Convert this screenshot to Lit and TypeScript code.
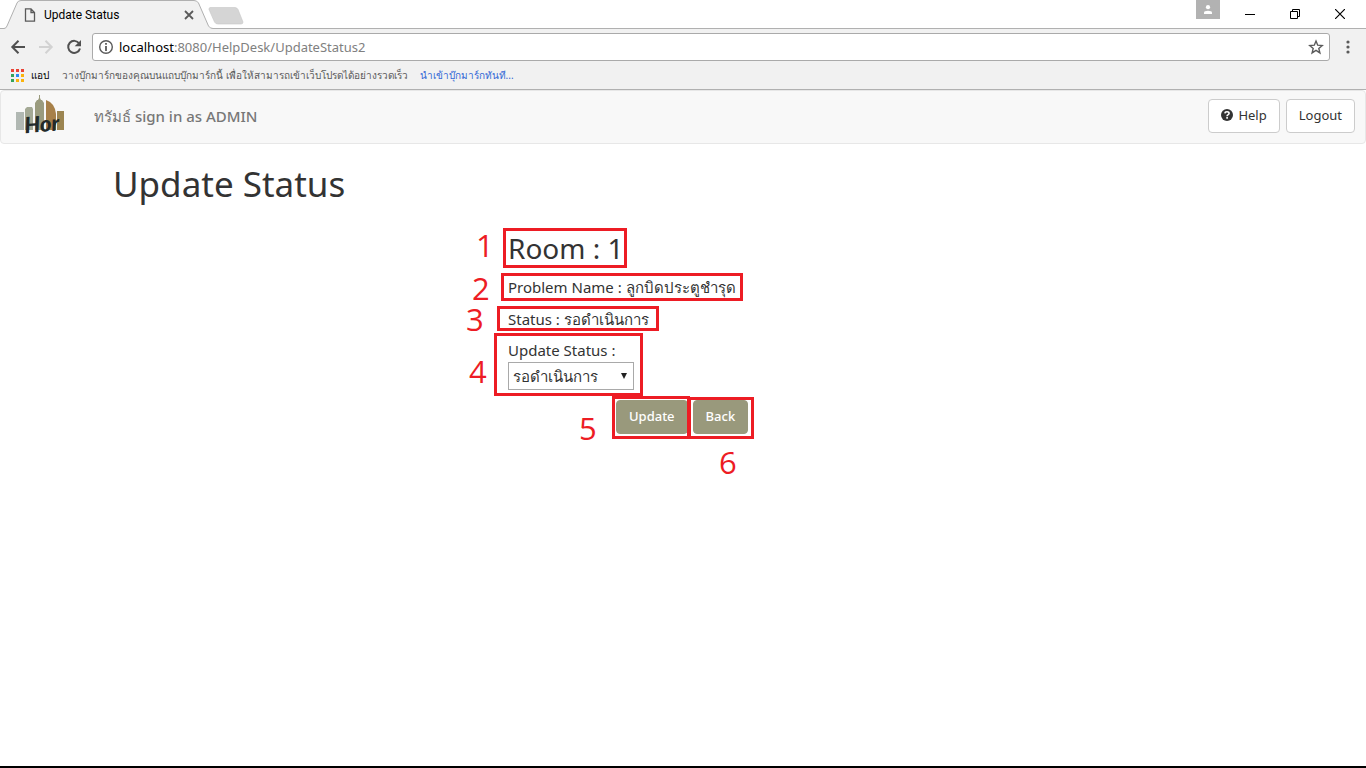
import { LitElement, html, svg, css } from "lit";
import { customElement, state } from "lit/decorators.js";

@customElement("browser-chrome")
class BrowserChrome extends LitElement {
  static styles = css`
    :host { display: block; font-family: "Noto Sans", "Open Sans", sans-serif; color: #000; }
    * { box-sizing: border-box; }
    button { border: 0; padding: 0; background: none; color: inherit; display: grid; place-items: center; }
    svg { display: block; }
    .tabs { position: relative; display: flex; height: 29px; background: #fff; border-bottom: 1px solid #b0b0b0; }
    .shapes { position: absolute; left: 0; top: 0; }
    .tab { position: relative; display: flex; align-items: center; width: 210px; padding: 2px 15px 0 24px; font-family: Roboto, "Noto Sans", sans-serif; font-size: 12px; line-height: 16px; }
    .tab span { flex: 1; margin-left: 8px; }
    .window { position: relative; margin-left: auto; display: flex; }
    .user { width: 24px; height: 19px; background: #b2b2b2; margin-right: 7px; }
    .win { width: 45px; height: 27px; }
    .win:first-of-type { width: 46px; }
    .window { padding-right: 4px; }
    .bar { display: flex; align-items: center; height: 36px; padding: 0 10px 0 4px; background: #f1f1f1; }
    .nav { width: 28px; height: 28px; }
    .address { flex: 1; display: flex; align-items: center; height: 28px; margin: 0 10px 0 4px; padding: 0 5px; background: #fff; border: 1px solid #aaa; border-radius: 3px; }
    .url { flex: 1; margin-left: 5px; font-size: 13px; color: #808080; line-height: 20px; }
    .url b { font-weight: 400; color: #000; }
    .marks { display: flex; align-items: center; height: 25px; padding: 0 11px 4px; background: #f1f1f1; border-bottom: 1px solid #b0b0b0; font-size: 10px; line-height: 16px; white-space: nowrap; color: #5a5a5a; }
    .marks a { text-decoration: none; color: #3367d6; margin-left: 12px; }
    .apps { color: #000; margin: 0 13px 0 7px; }
  `;
  render() {
    const dots = ["#ea4335", "#ea4335", "#ea4335", "#34a35a", "#2a8bf2", "#fbb30b", "#34a35a", "#fbb30b", "#fbb30b"];
    return html`
      <div class="tabs">
        <svg class="shapes" width="250" height="29" viewBox="0 0 250 29">
          <path d="M0 28.500H4Q6 28.500 7 26L17 3Q18 .5 21 .5H194Q197 .5 198.500 3L208.500 26Q210 28.500 213 28.500V29H0Z" fill="#f1f1f1"/>
          <path d="M0 28.500H4Q6 28.500 7 26L17 3Q18 .5 21 .5H194Q197 .5 198.500 3L208.500 26Q210 28.500 213 28.500" fill="none" stroke="#b0b0b0"/>
          <path d="M210 7.500H235Q237 7.500 238 9.500L243 22Q243 24 241 24H218Q215.500 24 214.500 22L209 9.500Q209 7.500 210 7.500Z" fill="#d5d5d5" stroke="#c6c6c6" stroke-width=".6"/>
        </svg>
        <div class="tab">
          <svg width="12" height="14" viewBox="0 0 12 14" fill="none" stroke="#5a5a5a" stroke-width="1.300"><path d="M1.500.8H7L10.500 4.500V13.200H1.500ZM7 .8V4.500H10.500"/></svg>
          <span>Update Status</span>
          <button aria-label="Close tab"><svg width="12" height="12" viewBox="0 0 12 12"><path d="M2 2L10 10M10 2L2 10" stroke="#5a5a5a" stroke-width="1.800"/></svg></button>
        </div>
        <div class="window">
          <button class="user" aria-label="User"><svg width="10" height="10" viewBox="0 0 10 10" fill="#fff"><circle cx="5" cy="2.200" r="2.100"/><path d="M1 9V7.500Q1 5.700 5 5.700T9 7.500V9Z"/></svg></button>
          <button class="win" aria-label="Minimize"><svg width="10" height="10"><path d="M0 5.500H10" stroke="#000"/></svg></button>
          <button class="win" aria-label="Restore"><svg width="10" height="10" fill="none" stroke="#000"><path d="M.5 2.500H7.500V9.500H.5ZM2.500 2.500V.5H9.500V7.500H7.500"/></svg></button>
          <button class="win" aria-label="Close"><svg width="10" height="10"><path d="M0 0L10 10M10 0L0 10" stroke="#000" stroke-width="1.200"/></svg></button>
        </div>
      </div>
      <div class="bar">
        <button class="nav" aria-label="Back"><svg width="16" height="16" viewBox="0 0 16 16" fill="none" stroke="#505050" stroke-width="2"><path d="M15 8H2.500M8.500 1.800L2.300 8L8.500 14.200"/></svg></button>
        <button class="nav" aria-label="Forward"><svg width="16" height="16" viewBox="0 0 16 16" fill="none" stroke="#d2d2d2" stroke-width="2"><path d="M1 8H13.500M7.500 1.800L13.700 8L7.500 14.200"/></svg></button>
        <button class="nav" aria-label="Reload"><svg width="16" height="16" viewBox="0 0 16 16"><path d="M13.200 4.500A6 6 0 1 0 14 9.500" fill="none" stroke="#505050" stroke-width="2"/><path d="M15 1V7.300H8.700Z" fill="#505050"/></svg></button>
        <div class="address">
          <svg width="16" height="16" viewBox="0 0 16 16"><circle cx="8" cy="8" r="6.300" fill="none" stroke="#5a5a5a" stroke-width="1.400"/><path d="M8 7V12M8 4V5.800" stroke="#5a5a5a" stroke-width="1.800"/></svg>
          <div class="url"><b>localhost</b>:8080/HelpDesk/UpdateStatus2</div>
          <svg width="16" height="16" viewBox="0 0 16 16"><path d="M8 2L9.700 6.200L14.200 6.500L10.800 9.400L11.900 13.900L8 11.400L4.100 13.900L5.200 9.400L1.800 6.500L6.300 6.200Z" fill="none" stroke="#5a5a5a" stroke-width="1.400"/></svg>
        </div>
        <button aria-label="Menu"><svg width="16" height="16" fill="#5a5a5a"><circle cx="8" cy="3" r="1.600"/><circle cx="8" cy="8" r="1.600"/><circle cx="8" cy="13" r="1.600"/></svg></button>
      </div>
      <div class="marks">
        <svg width="13" height="13">${dots.map((c, i) => svg`<rect x=${(i % 3) * 5} y=${Math.floor(i / 3) * 5} width="3" height="3" fill=${c} />`)}</svg>
        <span class="apps">แอป</span>
        <span>วางบุ๊กมาร์กของคุณบนแถบบุ๊กมาร์กนี้ เพื่อให้สามารถเข้าเว็บโปรดได้อย่างรวดเร็ว</span>
        <a href="#">นำเข้าบุ๊กมาร์กทันที...</a>
      </div>
    `;
  }
}

@customElement("app-root")
class AppRoot extends LitElement {
  static styles = css`
    :host { display: flex; flex-direction: column; min-height: 100vh; box-sizing: border-box; border-bottom: 2px solid #000; background: #fff; color: #333; font-family: "Noto Sans", "Open Sans", sans-serif; font-size: 15px; line-height: 24px; }
    * { box-sizing: border-box; }
    .navbar { display: flex; align-items: center; height: 54px; padding: 0 10px 2px 15px; background: #f8f8f8; border: 1px solid #e7e7e7; border-radius: 4px; }
    .brand { margin-right: auto; padding-left: 28px; color: #777; font-weight: 500; }
    .btn { display: flex; align-items: center; justify-content: center; height: 34px; padding: 0 12px 2px; margin: 0; border: 1px solid #ccc; border-radius: 4px; background: #fff; color: #333; font-family: inherit; font-size: 13px; line-height: 20px; }
    .btn + .btn { margin-left: 6px; }
    .btn svg { margin-right: 5px; }
    .container { width: 100%; max-width: 1170px; margin: 0 auto; padding: 0 15px; }
    h1 { margin: 20px 0 22px; font-size: 35px; line-height: 40px; font-weight: 400; }
    .form { position: relative; margin-left: calc(33.333% + 15px); width: 260px; }
    h2 { margin: 0; font-size: 28px; line-height: 45px; font-weight: 400; }
    p { margin: 0; line-height: 32px; }
    label { display: block; padding-top: 4px; line-height: 23px; }
    .select { position: relative; width: 126px; }
    select { display: block; appearance: none; width: 100%; height: 28px; padding: 0 4px; border: 1px solid #a9a9a9; border-radius: 0; background: #fff; color: #333; font-family: inherit; font-size: 15px; }
    .select svg { position: absolute; right: 7px; top: 11px; pointer-events: none; }
    .actions { display: flex; margin: 10px 0 0 108px; }
    .actions .btn { border-color: #99997c; background: #99997c; color: #fff; font-weight: 500; }
    .actions .btn + .btn { margin-left: 5px; }
    .notes { position: absolute; left: -46px; top: 0; pointer-events: none; overflow: visible; }
    .notes rect { fill: none; stroke: #ed1c24; stroke-width: 3px; }
    .notes text { fill: #ed1c24; font-family: "Open Sans", "Noto Sans", sans-serif; font-size: 31px; }
  `;
  @state() private status = "รอดำเนินการ";
  render() {
    const boxes = [[42.5, 3.5, 121, 37], [40.5, 48.5, 239, 25], [36.5, 81.5, 159, 22], [33.5, 108.5, 146, 60], [151.5, 171.5, 75, 40], [227.5, 172.5, 63, 39]];
    const marks = [[14, 31], [10, 74], [4, 105], [7, 157], [117, 214], [257, 248]];
    return html`
      <browser-chrome></browser-chrome>
      <nav class="navbar">
        <svg width="50" height="44" viewBox="0 0 50 44">
          <path fill="#b1b8b3" d="M0 18H8V36H0Z"/><path fill="#a4a995" d="M9 15L11 13H16L17 15V36H9Z"/>
          <path fill="#9a9b7e" d="M19 9L21 6H22L23 4V1H24V4L25 6H26L28 9V36H19Z"/>
          <path fill="#a78049" d="M30 6Q39 9 40 20V36H30Z"/><path fill="#9c8551" d="M41 17H48V36H41Z"/>
          <text x="8" y="38" font-family="Lato, sans-serif" font-size="22" font-weight="900" font-style="italic" fill="#222a2a" transform="rotate(-5 24 28)">Hor</text>
        </svg>
        <span class="brand">ทรัมธ์ sign in as ADMIN</span>
        <button class="btn"><svg width="12" height="12" viewBox="0 0 12 12"><circle cx="6" cy="6" r="6" fill="#333"/><path d="M3.900 4.400Q4 2.700 6 2.700T8.100 4.300Q8.100 5.200 6.900 5.900Q6.100 6.300 6.100 7.200M6.100 8.100V9.800" fill="none" stroke="#fff" stroke-width="1.600"/></svg>Help</button>
        <button class="btn">Logout</button>
      </nav>
      <main class="container">
        <h1>Update Status</h1>
        <form class="form" @submit=${(e: Event) => e.preventDefault()}>
          <h2>Room : 1</h2>
          <p>Problem Name : ลูกบิดประตูชำรุด</p>
          <p>Status : รอดำเนินการ</p>
          <label for="status">Update Status :</label>
          <div class="select">
            <select id="status" .value=${this.status} @change=${(e: Event) => (this.status = (e.target as HTMLSelectElement).value)}>
              <option>รอดำเนินการ</option>
            </select>
            <svg width="6" height="6"><path d="M0 0H6L3 6Z" fill="#222"/></svg>
          </div>
          <div class="actions">
            <button class="btn" type="submit">Update</button>
            <button class="btn" type="button">Back</button>
          </div>
          <svg class="notes" width="292" height="260">
            ${boxes.map(([x, y, w, h]) => svg`<rect x=${x} y=${y} width=${w} height=${h} />`)}
            ${marks.map(([x, y], i) => svg`<text x=${x} y=${y}>${i + 1}</text>`)}
          </svg>
        </form>
      </main>
    `;
  }
}
